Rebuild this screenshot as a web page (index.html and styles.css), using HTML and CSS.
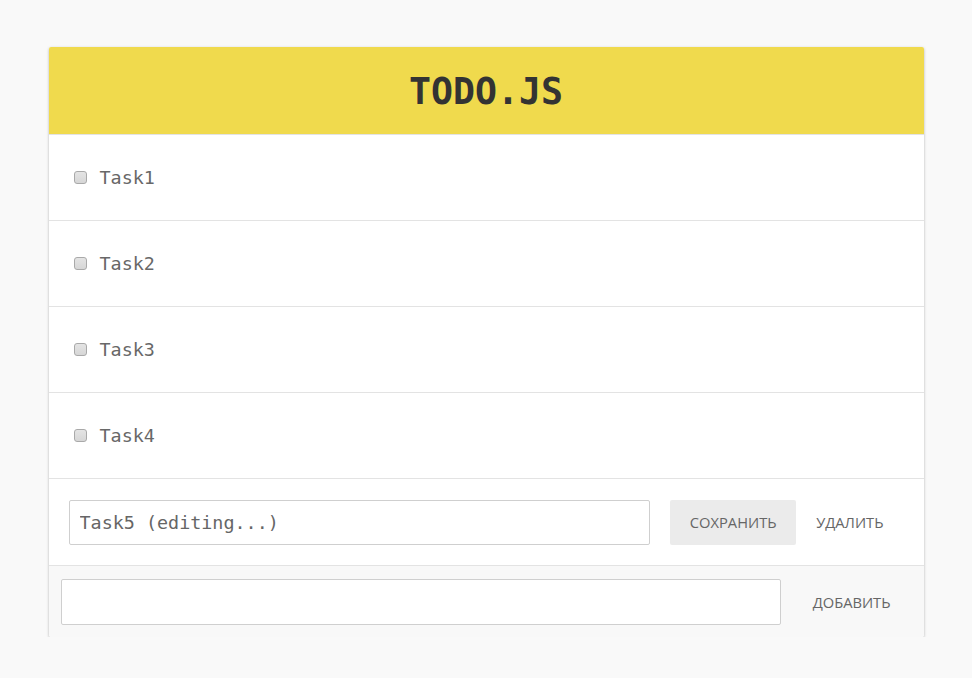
FILE: index.html
```html
<!DOCTYPE html>
<html>
<head>
<meta charset="utf-8">
<link rel="stylesheet" href="styles.css">
</head>
<body>
<div class="card">
  <header class="header"><h1 class="title">TODO.JS</h1></header>
  <ul class="list">
    <li class="item"><input type="checkbox" class="check"><span class="label">Task1</span></li>
    <li class="item"><input type="checkbox" class="check"><span class="label">Task2</span></li>
    <li class="item"><input type="checkbox" class="check"><span class="label">Task3</span></li>
    <li class="item"><input type="checkbox" class="check"><span class="label">Task4</span></li>
    <li class="item editing">
      <input type="text" class="field edit-field" value="Task5 (editing...)">
      <button class="btn btn-save">Сохранить</button>
      <button class="btn">Удалить</button>
    </li>
  </ul>
  <form class="add-row">
    <input type="text" class="field add-field">
    <button type="button" class="btn">Добавить</button>
  </form>
</div>
</body>
</html>
```
FILE: styles.css
```css
html, body {
  margin: 0;
  padding: 0;
  background: #f9f9f9;
}
body {
  padding-top: 47px;
  font-family: "DejaVu Sans Mono", monospace;
}
.card {
  width: 875px;
  margin: 0 auto;
  background: #fff;
  box-shadow: 0 1px 3px rgba(0,0,0,0.28);
  border-radius: 2px;
  overflow: hidden;
}
.header {
  background: #f0da4d;
  height: 87px;
  display: flex;
  align-items: center;
  justify-content: center;
  border-bottom: 1px solid #e3e3e3;
}
.title {
  margin: 0;
  font-family: "DejaVu Sans Mono", monospace;
  font-weight: bold;
  font-size: 36.5px;
  color: #333;
  padding-top: 2px;
}
.list {
  list-style: none;
  margin: 0;
  padding: 0;
}
.item {
  height: 86px;
  box-sizing: border-box;
  border-bottom: 1px solid #e3e3e3;
  display: flex;
  align-items: center;
  padding: 0 20px 0 25px;
}
.check {
  -webkit-appearance: none;
  appearance: none;
  width: 13px;
  height: 13px;
  margin: 0 13px 0 0;
  box-sizing: border-box;
  border: 1px solid #a9a9a9;
  border-radius: 3px;
  background: linear-gradient(#e4e4e4, #d6d6d6);
}
.label {
  font-size: 18.4px;
  color: #686868;
}
.item.editing {
  padding: 0 20px;
  height: 87px;
}
.field {
  height: 45px;
  box-sizing: border-box;
  border: 1px solid #cfcfcf;
  border-radius: 2px;
  padding: 0 10px;
  font-family: "DejaVu Sans Mono", monospace;
  font-size: 18.4px;
  color: #666;
  background: #fff;
  outline: none;
}
.edit-field {
  flex: 1;
  margin-right: 20px;
}
.btn {
  height: 45px;
  border: none;
  background: transparent;
  padding: 0 20px;
  font-family: "Open Sans", sans-serif;
  font-size: 14.7px;
  text-transform: uppercase;
  color: #666;
  border-radius: 2px;
  cursor: pointer;
}
.btn-save {
  background: #ebebeb;
  width: 126px;
  padding: 0;
}
.add-row {
  margin: 0;
  background: #f8f8f8;
  display: flex;
  align-items: center;
  padding: 13px 13px 12px 12px;
}
.add-field {
  flex: 1;
  height: 46px;
  margin-right: 12px;
}
```
